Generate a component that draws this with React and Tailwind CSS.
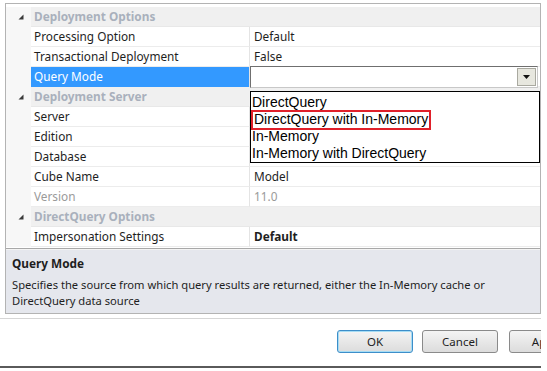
const rows = [
    { type: "cat", name: "Deployment Options" },
    { name: "Processing Option", value: "Default" },
    { name: "Transactional Deployment", value: "False" },
    { name: "Query Mode", value: "", selected: true },
    { type: "cat", name: "Deployment Server" },
    { name: "Server", value: "" },
    { name: "Edition", value: "" },
    { name: "Database", value: "" },
    { name: "Cube Name", value: "Model" },
    { name: "Version", value: "11.0", readOnly: true },
    { type: "cat", name: "DirectQuery Options" },
    { name: "Impersonation Settings", value: "Default", bold: true },
];

const options = [
    "DirectQuery",
    "DirectQuery with In-Memory",
    "In-Memory",
    "In-Memory with DirectQuery",
];

function Expander() {
    return (
        <svg width="6" height="6" viewBox="0 0 6 6" className="ml-[12px]">
            <polygon points="5.5,0.5 5.5,5.5 0.5,5.5" fill="#3a3a3a" />
        </svg>
    );
}

function Combo() {
    return (
        <div className="absolute left-0 -top-[1px] w-[288px] h-[22px] bg-white border border-[#6f6f6f] border-r-[#c8c8c8] border-b-[#c8c8c8]">
            <div className="absolute right-[1px] top-[1px] w-[19px] h-[18px] bg-[#e7e7df] border border-[#a9a9a0] flex items-center justify-center">
                <svg width="7" height="4" viewBox="0 0 7 4">
                    <polygon points="0,0 7,0 3.5,4" fill="#111" />
                </svg>
            </div>
        </div>
    );
}

function Row({ row }) {
    if (row.type === "cat") {
        return (
            <div className="h-[20px] flex items-center">
                <div className="w-[25px] h-full flex items-center bg-[#f7f7f7]">
                    <Expander />
                </div>
                <div className="flex-1 h-full bg-[#f0f0f0] border-b border-[#e8e8e8] flex items-center pl-[3px] font-bold text-[#a9b0bc]">
                    {row.name}
                </div>
            </div>
        );
    }
    return (
        <div className="h-[20px] flex">
            <div className="w-[25px] h-full bg-[#f7f7f7]" />
            <div
                className={`w-[219px] h-full flex items-center pl-[3px] border-r border-[#e4e4e4] ${
                    row.selected
                        ? "bg-[#3399ff] text-white"
                        : "border-b border-b-[#ececec] " +
                          (row.readOnly ? "text-[#9a9a9a]" : "text-[#1e1e1e]")
                }`}
            >
                {row.name}
            </div>
            <div
                className={`relative flex-1 h-full flex items-center pl-[4px] border-b border-[#ececec] ${
                    row.readOnly ? "text-[#9a9a9a]" : "text-[#1e1e1e]"
                } ${row.bold ? "font-bold" : ""}`}
            >
                {row.selected ? <Combo /> : row.value}
            </div>
        </div>
    );
}

export default function App() {
    return (
        <div className="relative w-[547px] h-[371px] bg-white overflow-hidden font-['Noto_Sans',sans-serif] text-[11.8px] leading-none">
            <div className="w-[541px] h-full flex flex-col overflow-hidden">
                <div className="ml-[5px] mt-[3px] w-[536px] border border-[#b3b3b3]">
                    <div className="pt-[3px] bg-white border-b border-[#a8a8a8]">
                        {rows.map((row, i) => (
                            <Row key={i} row={row} />
                        ))}
                        <div className="h-[1px]" />
                    </div>
                    <div className="h-[64px] bg-[#e5e7ed] border-t border-[#f4f4f4] px-[6px] pt-[8px] text-[#1e1e1e]">
                        <div className="font-bold">Query Mode</div>
                        <div className="mt-[7px] leading-[16px] text-[11.2px]">
                            Specifies the source from which query results are returned, either the In-Memory cache or
                            <br />
                            DirectQuery data source
                        </div>
                    </div>
                </div>
                <div className="mt-[4px] border-t border-[#d6d6d6]" />
                <div className="mt-[11px] flex pl-[337px] text-[#1e1e1e] text-[11.5px]">
                    <button className="shrink-0 w-[76px] h-[23px] rounded-[3px] border border-[#3d8ec9] bg-gradient-to-b from-[#f4f4f4] to-[#dcdcdc] shadow-[inset_0_0_0_1px_#a6dcf4]">
                        OK
                    </button>
                    <button className="shrink-0 ml-[9px] w-[76px] h-[23px] rounded-[3px] border border-[#8a8a8a] bg-gradient-to-b from-[#f4f4f4] to-[#dcdcdc]">
                        Cancel
                    </button>
                    <button className="shrink-0 ml-[11px] w-[76px] h-[23px] rounded-[3px] border border-[#8a8a8a] bg-gradient-to-b from-[#f4f4f4] to-[#dcdcdc]">
                        Apply
                    </button>
                </div>
                <div className="mt-[13px] border-t-2 border-[#5a5a5a]" />
            </div>
            <div className="absolute left-[250px] top-[91px] w-[290px] h-[72px] bg-white border border-black font-['Liberation_Sans',sans-serif] text-[14px] leading-[17px] text-black pl-[1px] pt-[2px]">
                {options.map((o, i) => (
                    <div key={o} className="h-[17px] flex items-center">
                        <span
                            className={
                                i === 1
                                    ? "-ml-[1px] px-[1px] h-[20px] flex items-center border-2 border-[#e0202a] -my-[1px]"
                                    : ""
                            }
                        >
                            {o}
                        </span>
                    </div>
                ))}
            </div>
        </div>
    );
}
